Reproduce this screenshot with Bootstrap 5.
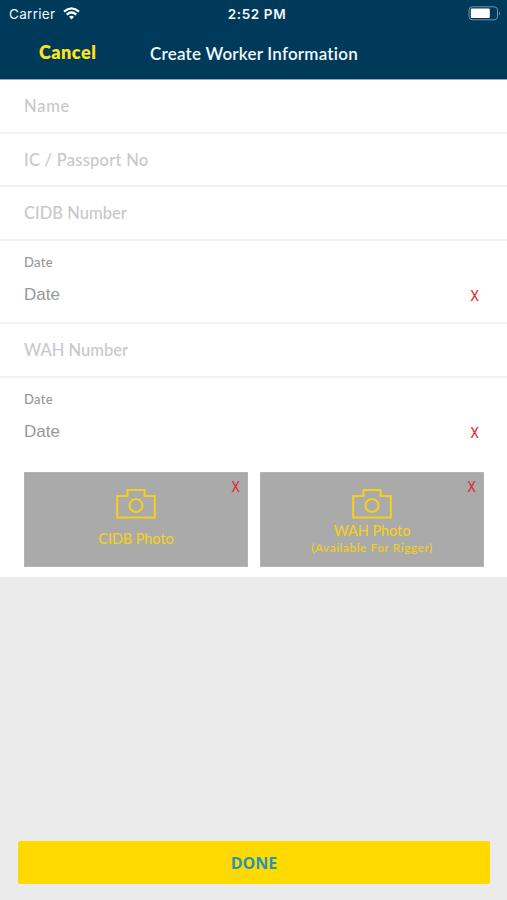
<!DOCTYPE html>
<html lang="en">
<head>
<meta charset="utf-8">
<meta name="viewport" content="width=device-width, initial-scale=1">
<title>Create Worker Information</title>
<link href="https://cdn.jsdelivr.net/npm/bootstrap@5.3.0/dist/css/bootstrap.min.css" rel="stylesheet">
<style>
body { font-family: Lato, "Open Sans", sans-serif; background: #ebebeb; line-height: 20px; }
.screen { height: 900px; overflow: hidden; }
.app-header { background: #003a5b; height: 80px; border-bottom: 1px solid #8fadbd; color: #f2f8fb; }
.status-bar { height: 27px; padding: 0 6px 0 9px; font-family: Inter, sans-serif; font-size: 13.5px; letter-spacing: .3px; }
.status-side { flex: 1 1 0; }
.clock { font-weight: 600; font-size: 13.5px; letter-spacing: .6px; margin: 0 -2px 0 2px; }
.title-bar { height: 51px; padding-left: 39px; }
.cancel { color: #ffe21a; font-weight: 800; font-size: 18px; letter-spacing: .5px; width: 111px; line-height: 50px; }
.page-title { font-weight: 600; font-size: 17px; letter-spacing: .22px; line-height: 53px; }
.field { height: 54px; padding: 0 24px; border-bottom: 2px solid #f1f1f1; font-size: 16.5px; color: #c8c8cb; letter-spacing: .03px; font-weight: 500; }
.field-name { letter-spacing: .75px; }
.field-mid { height: 53px; letter-spacing: .25px; }
.date-field { height: 83px; padding: 11px 28px 0 24px; border-bottom: 2px solid #f1f1f1; color: #98989a; }
.date-last { border-bottom: 0; }
.date-label { font-size: 13px; letter-spacing: .3px; font-weight: 500; }
.date-value { font-family: "Liberation Sans", Arial, sans-serif; font-size: 17px; margin-top: 13px; }
.date-clear { margin-top: 14px; }
.clear-x { color: #dd2f36; font: 14px/20px Roboto, sans-serif; letter-spacing: 0; }
.photos { height: 116px; padding: 11px 23px 0 24px; gap: 12px; }
.photo { height: 95px; background: #aaa; border: 1px solid #b3b3b3; color: #f3cf21; font-size: 14.5px; letter-spacing: -.1px; font-weight: 500; padding-top: 15px; line-height: 18px; }
.photo .clear-x { right: 7px; top: 4px; }
.photo-label { margin-top: 11px; }
.photo-label-top { margin-top: 3px; }
.photo-note { font-size: 12px; line-height: 15px; letter-spacing: .5px; }
.done { height: 43px; margin: 0 17px 16px 18px; background: #ffd900; border-radius: 2px; color: #2696b4; font: 700 16px/42px "Open Sans", sans-serif; padding: 0; }
</style>
</head>
<body>
<main class="screen d-flex flex-column">
  <header class="app-header">
    <div class="status-bar d-flex align-items-center">
      <div class="status-side d-flex align-items-center">
        <span>Carrier</span>
        <svg class="ms-2" width="17" height="13" viewBox="0 0 17 13" fill="none" stroke="#fff" stroke-width="2.2"><path d="M1 4.6Q8.5-2 16 4.6M3.7 7.6Q8.5 3.4 13.3 7.6"/><path d="M6 9.8Q8.5 7.7 11 9.8L8.5 12.5Z" fill="#fff" stroke="none"/></svg>
      </div>
      <span class="clock">2:52 PM</span>
      <div class="status-side d-flex justify-content-end">
        <svg width="33" height="15" viewBox="0 0 33 15"><rect x="1" y=".8" width="28.5" height="13" rx="3.2" fill="none" stroke="#7394a8"/><rect x="2.8" y="2.5" width="19" height="9.6" rx="1" fill="#fff"/><path d="M31 5.2v4.2q2-2.1 0-4.2" fill="#7394a8"/></svg>
      </div>
    </div>
    <div class="title-bar d-flex">
      <span class="cancel">Cancel</span>
      <span class="page-title">Create Worker Information</span>
    </div>
  </header>
  <form class="bg-white">
    <div class="field field-name d-flex align-items-center">Name</div>
    <div class="field field-mid d-flex align-items-center">IC / Passport No</div>
    <div class="field d-flex align-items-center">CIDB Number</div>
    <div class="date-field">
      <div class="date-label">Date</div>
      <div class="d-flex justify-content-between"><span class="date-value">Date</span><span class="clear-x date-clear">X</span></div>
    </div>
    <div class="field d-flex align-items-center">WAH Number</div>
    <div class="date-field date-last">
      <div class="date-label">Date</div>
      <div class="d-flex justify-content-between"><span class="date-value">Date</span><span class="clear-x date-clear">X</span></div>
    </div>
    <div class="photos d-flex">
      <div class="photo position-relative flex-fill w-50 d-flex flex-column align-items-center">
        <span class="clear-x position-absolute">X</span>
        <svg width="40" height="31" viewBox="0 0 40 31" fill="none" stroke="#f3cf21" stroke-width="2.1"><path d="M1.2 8H11.5V2H28.5V8H38.8V29.5H1.2Z"/><circle cx="20" cy="17.5" r="6.5"/></svg>
        <span class="photo-label">CIDB Photo</span>
      </div>
      <div class="photo position-relative flex-fill w-50 d-flex flex-column align-items-center">
        <span class="clear-x position-absolute">X</span>
        <svg width="40" height="31" viewBox="0 0 40 31" fill="none" stroke="#f3cf21" stroke-width="2.1"><path d="M1.2 8H11.5V2H28.5V8H38.8V29.5H1.2Z"/><circle cx="20" cy="17.5" r="6.5"/></svg>
        <span class="photo-label-top">WAH Photo</span>
        <span class="photo-note">(Available For Rigger)</span>
      </div>
    </div>
  </form>
  <button class="done btn mt-auto" type="button">DONE</button>
</main>
<script src="https://cdn.jsdelivr.net/npm/bootstrap@5.3.0/dist/js/bootstrap.bundle.min.js"></script>
</body>
</html>
